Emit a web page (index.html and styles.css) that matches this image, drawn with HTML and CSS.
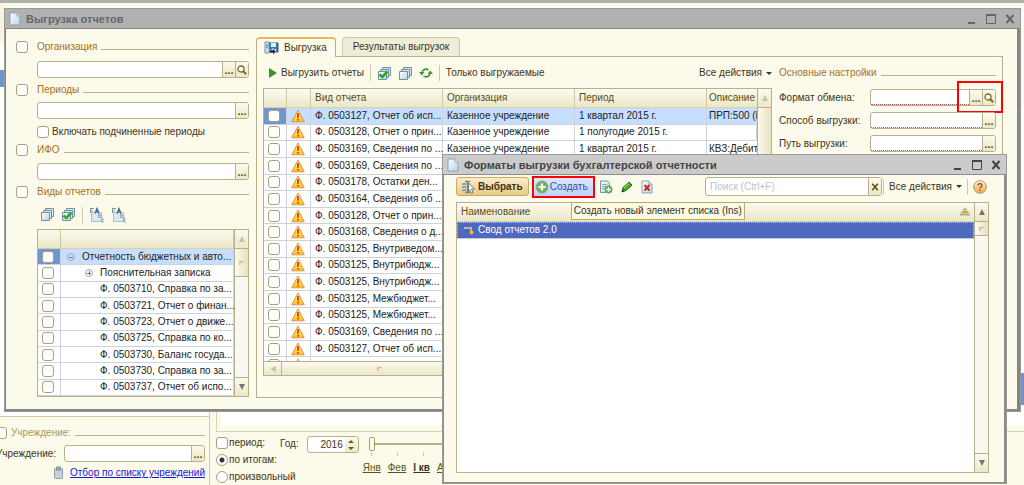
FILE: index.html
```
<!DOCTYPE html>
<html lang="ru">
<head>
<meta charset="utf-8">
<title>Выгрузка отчетов</title>
<link rel="stylesheet" href="styles.css">
</head>
<body>
<svg class="sprite" aria-hidden="true">
  <defs>
    <linearGradient id="gBlue" x1="0" y1="0" x2="1" y2="1"><stop offset="0" stop-color="#fff"/><stop offset="1" stop-color="#b9d3e4"/></linearGradient>
    <linearGradient id="gWarn" x1="0" y1="0" x2="0" y2="1"><stop offset="0" stop-color="#fff0b0"/><stop offset=".6" stop-color="#ffd83c"/><stop offset="1" stop-color="#ffc21e"/></linearGradient>
    <linearGradient id="gHelp" x1="0" y1="0" x2="0" y2="1"><stop offset="0" stop-color="#fff0cf"/><stop offset="1" stop-color="#f0a850"/></linearGradient>
    <symbol id="doc" viewBox="0 0 12 14"><path d="M1 1h7l3 3v9H1z" fill="url(#gBlue)" stroke="#8aa4b5"/><path d="M8 1v3h3" fill="#fff" stroke="#8aa4b5"/></symbol>
    <symbol id="stack" viewBox="0 0 15 15"><path d="M5.500 1.500h8v8h-8z" fill="#d5e5ee" stroke="#6f91a6"/><path d="M3.500 3.500h8v8h-8z" fill="#d5e5ee" stroke="#6f91a6"/><path d="M1.500 5.500h8v8h-8z" fill="url(#gBlue)" stroke="#6f91a6"/></symbol>
    <symbol id="stackok" viewBox="0 0 15 15"><use href="#stack"/><path d="M2.500 8.500l2.800 2.500 5.200-5.500" fill="none" stroke="#35a522" stroke-width="2.600"/></symbol>
    <symbol id="warn" viewBox="0 0 14 14"><path d="M7 1L13.300 12.800H.7z" fill="url(#gWarn)" stroke="#ee8a50" stroke-linejoin="round"/><path d="M7 4v4.800M7 9.900v1.600" stroke="#cc3a18" stroke-width="1.700"/></symbol>
    <symbol id="lens" viewBox="0 0 10 10"><circle cx="4" cy="4" r="3" fill="#fffdf0" stroke="#776b24" stroke-width="1.300"/><path d="M6.200 6.200L9.200 9.200" stroke="#776b24" stroke-width="2"/></symbol>
    <symbol id="refresh" viewBox="0 0 14 12"><path d="M3 6a4 4 0 0 1 6.500-3M11 6a4 4 0 0 1-6.500 3" fill="none" stroke="#3f9130" stroke-width="1.600"/><path d="M0 5h5.500L2.800 8.500zM14 7H8.500l2.700-3.500z" fill="#3f9130"/></symbol>
    <symbol id="tree" viewBox="0 0 16 16"><path d="M2.500 5.500h10l1 9h-11z" fill="#dbe8ee" stroke="#b0c0c8"/><path d="M1 1.500h4M1 4h3M1.500 1v5" stroke="#7d95a3"/><path d="M6 6.500l2-5L10 6.500M7 4.800h2.500" fill="none" stroke="#3a6c92" stroke-width="1.300"/><path d="M9.500 7v3.500H12V8H9.500M15 12h-2.500v3H15" fill="none" stroke="#90a5b0"/></symbol>
    <symbol id="disk" viewBox="0 0 15 14"><path d="M5 2h9v9H5z" fill="#3779b5" stroke="#275d90"/><path d="M7 2h5v4H7zM8 8h4v3H8z" fill="#e4f1fa"/><path d="M1 1h4v11H1z" fill="#cde0ee" stroke="#7898b0"/><path d="M2 4h2M2 6h2" stroke="#47789d"/><path d="M5 9h4v-2l3 3.500-3 3.500v-2H5z" fill="#1e3142" stroke="#fff" stroke-width=".5"/></symbol>
    <symbol id="pick" viewBox="0 0 15 14"><path d="M1 4h4M1 7h4M1 10h4" stroke="#8da4b3" stroke-width="2"/><path d="M4 1.500h5M6.500 2v10M4 12.500h5" fill="none" stroke="#6d8a9e" stroke-width="1.500"/><path d="M7.500 3l6 6h-3l1.500 3.500-1.800.7L8.700 10l-1.200 1.500z" fill="#fff" stroke="#566d80" stroke-width=".9"/></symbol>
    <symbol id="plus" viewBox="0 0 14 14"><circle cx="7" cy="7" r="6" fill="#6eb25b" stroke="#86a97c"/><path d="M7 3.500v7M3.500 7h7" stroke="#fff" stroke-width="2.200"/></symbol>
    <symbol id="docplus" viewBox="0 0 14 14"><path d="M1.500 1h7l2 2.500v9h-9z" fill="url(#gBlue)" stroke="#7193a6"/><path d="M3 4.500h5M3 6.500h5M3 8.500h3" stroke="#8ca9b9"/><circle cx="9.500" cy="9.500" r="3.800" fill="#61aa51" stroke="#87ad7c" stroke-width=".7"/><path d="M9.500 7.300v4.400M7.300 9.500h4.400" stroke="#fff" stroke-width="1.300"/></symbol>
    <symbol id="pencil" viewBox="0 0 12 12"><path d="M1 11l1-4.500 6-5.500 3 3-6 5.500z" fill="#47aa22" stroke="#287018"/><path d="M3 7l5-4.500" stroke="#b2ea87"/><path d="M1 11l.6-2.500 1.900 1.800z" fill="#1f3414"/></symbol>
    <symbol id="docdel" viewBox="0 0 12 14"><use href="#doc"/><path d="M3.500 5l5 5.500M8.500 5l-5 5.500" stroke="#d0251c" stroke-width="1.900"/></symbol>
    <symbol id="clip" viewBox="0 0 11 14"><rect x="1.500" y="2.500" width="8" height="10" rx="1" fill="#c7d1d8" stroke="#8c99a2"/><path d="M3.500 1h4v3h-4z" fill="#a6b2ba" stroke="#808d96"/></symbol>
    <symbol id="item" viewBox="0 0 12 10"><path d="M1 3h7v3" fill="none" stroke="#b9bb9c" stroke-width="2"/><circle cx="8.500" cy="7.500" r="2" fill="#f2b43e"/></symbol>
    <symbol id="min" viewBox="0 0 10 10"><path d="M1 9h7" stroke="currentColor" stroke-width="2"/></symbol>
    <symbol id="max" viewBox="0 0 10 10"><path d="M.5 1h9v8.500h-9z" fill="none" stroke="currentColor"/><path d="M0 1h10" stroke="currentColor" stroke-width="2"/></symbol>
    <symbol id="close" viewBox="0 0 10 10"><path d="M1.500 1l7 8M8.500 1l-7 8" stroke="currentColor" stroke-width="2"/></symbol>
    <symbol id="help" viewBox="0 0 14 14"><circle cx="7" cy="7" r="6.300" fill="url(#gHelp)" stroke="#b9936d"/><path d="M5 5.500C5 3 9 3 9 5.300 9 7 7 6.800 7 8.500M7 9.800V11" fill="none" stroke="#7d4b1c" stroke-width="1.300"/></symbol>
    <symbol id="grip" viewBox="0 0 6 6"><path d="M1 5V1.500h4" fill="none" stroke="#c8c198" stroke-width="1.500"/></symbol>
  </defs>
</svg>

<div class="desktop">
  <div class="backdrop">
    <div class="back-list"><i class="back-selected"></i></div>
    <div class="back-side"></div>
  </div>

  <section class="filters">
    <form class="org">
      <div class="legend dim"><input type="checkbox" id="f-org"><label for="f-org">Учреждение:</label></div>
      <div class="org-row"><label for="org-name">Учреждение:</label>
        <div class="combo"><input type="text" id="org-name"><button type="button" aria-label="Выбрать">...</button></div></div>
      <div class="org-link"><svg width="11" height="14"><use href="#clip"/></svg><a href="#">Отбор по списку учреждений</a></div>
    </form>
    <form class="time">
      <div class="time-frame"></div>
      <div class="time-body">
        <div class="modes">
          <label><input type="checkbox">период:</label>
          <label><input type="radio" name="mode" checked>по итогам:</label>
          <label><input type="radio" name="mode">произвольный</label>
        </div>
        <label class="year-label" for="year">Год:</label>
        <div class="combo year"><input type="text" id="year" value="2016"><button type="button" aria-label="Изменить год"><svg width="8" height="12" viewBox="0 0 8 12"><path d="M1 4l3-3 3 3zM1 8l3 3 3-3z" fill="#6b5c18"/></svg></button></div>
        <div class="months">
          <input type="range" min="0" max="12" value="0" aria-label="Месяц">
          <div class="ticks"><i></i><i></i><i></i></div>
          <div class="month-links"><a href="#">Янв</a><a href="#">Фев</a><a href="#" class="quarter">I кв</a><a href="#">А</a></div>
        </div>
      </div>
    </form>
  </section>

  <main class="window reports">
    <header class="titlebar"><svg width="12" height="14"><use href="#doc"/></svg><h1>Выгрузка отчетов</h1>
      <button aria-label="Свернуть"><svg width="10" height="10"><use href="#min"/></svg></button><button aria-label="Развернуть"><svg width="10" height="10"><use href="#max"/></svg></button><button aria-label="Закрыть"><svg width="10" height="10"><use href="#close"/></svg></button></header>
    <div class="reports-body">
      <form class="criteria">
        <div class="legend"><input type="checkbox" id="c-org"><label for="c-org">Организация</label></div>
        <div class="combo"><input type="text" aria-label="Организация"><button type="button" aria-label="Выбрать">...</button><button type="button" aria-label="Найти"><svg width="10" height="10"><use href="#lens"/></svg></button></div>
        <div class="legend"><input type="checkbox" id="c-per"><label for="c-per">Периоды</label></div>
        <div class="combo"><input type="text" aria-label="Периоды"><button type="button" aria-label="Выбрать">...</button></div>
        <label class="nested"><input type="checkbox">Включать подчиненные периоды</label>
        <div class="legend ifo"><input type="checkbox" id="c-ifo"><label for="c-ifo">ИФО</label></div>
        <div class="combo"><input type="text" aria-label="ИФО"><button type="button" aria-label="Выбрать">...</button></div>
        <div class="legend kinds"><input type="checkbox" id="c-kind"><label for="c-kind">Виды отчетов</label></div>
        <div class="tools kind-tools">
          <button type="button" aria-label="Снять все"><svg width="15" height="15"><use href="#stack"/></svg></button>
          <button type="button" aria-label="Отметить все"><svg width="15" height="15"><use href="#stackok"/></svg></button>
          <i class="sep"></i>
          <button type="button" aria-label="Развернуть дерево"><svg width="16" height="16"><use href="#tree"/></svg></button>
          <button type="button" aria-label="Свернуть дерево"><svg width="16" height="16"><use href="#tree"/></svg></button>
        </div>
        <div class="grid kind-grid">
          <div class="grid-view">
            <table>
              <colgroup><col class="c-check"><col></colgroup>
              <thead><tr><th></th><th></th></tr></thead>
              <tbody>
                <tr class="current"><td><input type="checkbox" aria-label="Отметить"></td><td class="l0"><span class="node minus"></span>Отчетность бюджетных и авто...</td></tr>
                <tr><td><input type="checkbox" aria-label="Отметить"></td><td class="l1"><span class="node plus"></span>Пояснительная записка</td></tr>
                <tr><td><input type="checkbox" aria-label="Отметить"></td><td class="l2">Ф. 0503710, Справка по за...</td></tr>
                <tr><td><input type="checkbox" aria-label="Отметить"></td><td class="l2">Ф. 0503721, Отчет о финан...</td></tr>
                <tr><td><input type="checkbox" aria-label="Отметить"></td><td class="l2">Ф. 0503723, Отчет о движе...</td></tr>
                <tr><td><input type="checkbox" aria-label="Отметить"></td><td class="l2">Ф. 0503725, Справка по ко...</td></tr>
                <tr><td><input type="checkbox" aria-label="Отметить"></td><td class="l2">Ф. 0503730, Баланс госуда...</td></tr>
                <tr><td><input type="checkbox" aria-label="Отметить"></td><td class="l2">Ф. 0503730, Справка по за...</td></tr>
                <tr><td><input type="checkbox" aria-label="Отметить"></td><td class="l2">Ф. 0503737, Отчет об испо...</td></tr>
              </tbody>
            </table>
          </div>
          <div class="vbar"><i class="up off"></i><i class="thumb tall"><svg width="6" height="6"><use href="#grip"/></svg></i><i class="down"></i></div>
        </div>
      </form>

      <div class="tabs">
        <nav role="tablist"><button role="tab" aria-selected="true"><svg width="15" height="14"><use href="#disk"/></svg>Выгрузка</button><button role="tab" aria-selected="false">Результаты выгрузок</button></nav>
        <div class="panel">
          <section class="upload">
            <div class="tools">
              <button class="run"><svg width="8" height="10" viewBox="0 0 8 10"><path d="M0 0l8 5-8 5z" fill="#37952a"/></svg>Выгрузить отчеты</button>
              <i class="sep"></i>
              <button aria-label="Отметить все"><svg width="15" height="15"><use href="#stackok"/></svg></button>
              <button aria-label="Снять все"><svg width="15" height="15"><use href="#stack"/></svg></button>
              <button aria-label="Обновить"><svg width="14" height="12"><use href="#refresh"/></svg></button>
              <i class="sep"></i>
              <button>Только выгружаемые</button>
              <button class="menu">Все действия</button>
            </div>
            <div class="grid report-grid">
              <div class="grid-view">
                <table>
                  <colgroup><col class="c-check"><col class="c-icon"><col class="c-text"><col class="c-text"><col class="c-text"><col></colgroup>
                  <thead><tr><th></th><th></th><th>Вид отчета</th><th>Организация</th><th>Период</th><th class="cut">Описание а</th></tr></thead>
                  <tbody>
                    <tr class="current"><td><input type="checkbox" aria-label="Отметить"></td><td><svg width="14" height="14"><use href="#warn"/></svg></td><td>Ф. 0503127, Отчет об исп...</td><td>Казенное учреждение</td><td>1 квартал 2015 г.</td><td class="cut">ПРП:500 (Е</td></tr>
                    <tr><td><input type="checkbox" aria-label="Отметить"></td><td><svg width="14" height="14"><use href="#warn"/></svg></td><td>Ф. 0503128, Отчет о прин...</td><td>Казенное учреждение</td><td>1 полугодие 2015 г.</td><td></td></tr>
                    <tr><td><input type="checkbox" aria-label="Отметить"></td><td><svg width="14" height="14"><use href="#warn"/></svg></td><td>Ф. 0503169, Сведения по ...</td><td>Казенное учреждение</td><td>1 квартал 2015 г.</td><td class="cut">КВЗ:Дебит</td></tr>
                    <tr><td><input type="checkbox" aria-label="Отметить"></td><td><svg width="14" height="14"><use href="#warn"/></svg></td><td>Ф. 0503169, Сведения по ...</td><td></td><td></td><td></td></tr>
                    <tr><td><input type="checkbox" aria-label="Отметить"></td><td><svg width="14" height="14"><use href="#warn"/></svg></td><td>Ф. 0503178, Остатки ден...</td><td></td><td></td><td></td></tr>
                    <tr><td><input type="checkbox" aria-label="Отметить"></td><td><svg width="14" height="14"><use href="#warn"/></svg></td><td>Ф. 0503164, Сведения об ...</td><td></td><td></td><td></td></tr>
                    <tr><td><input type="checkbox" aria-label="Отметить"></td><td><svg width="14" height="14"><use href="#warn"/></svg></td><td>Ф. 0503128, Отчет о прин...</td><td></td><td></td><td></td></tr>
                    <tr><td><input type="checkbox" aria-label="Отметить"></td><td><svg width="14" height="14"><use href="#warn"/></svg></td><td>Ф. 0503168, Сведения о д...</td><td></td><td></td><td></td></tr>
                    <tr><td><input type="checkbox" aria-label="Отметить"></td><td><svg width="14" height="14"><use href="#warn"/></svg></td><td>Ф. 0503125, Внутриведом...</td><td></td><td></td><td></td></tr>
                    <tr><td><input type="checkbox" aria-label="Отметить"></td><td><svg width="14" height="14"><use href="#warn"/></svg></td><td>Ф. 0503125, Внутрибюдж...</td><td></td><td></td><td></td></tr>
                    <tr><td><input type="checkbox" aria-label="Отметить"></td><td><svg width="14" height="14"><use href="#warn"/></svg></td><td>Ф. 0503125, Внутрибюдж...</td><td></td><td></td><td></td></tr>
                    <tr><td><input type="checkbox" aria-label="Отметить"></td><td><svg width="14" height="14"><use href="#warn"/></svg></td><td>Ф. 0503125, Межбюджет...</td><td></td><td></td><td></td></tr>
                    <tr><td><input type="checkbox" aria-label="Отметить"></td><td><svg width="14" height="14"><use href="#warn"/></svg></td><td>Ф. 0503125, Межбюджет...</td><td></td><td></td><td></td></tr>
                    <tr><td><input type="checkbox" aria-label="Отметить"></td><td><svg width="14" height="14"><use href="#warn"/></svg></td><td>Ф. 0503169, Сведения по ...</td><td></td><td></td><td></td></tr>
                    <tr><td><input type="checkbox" aria-label="Отметить"></td><td><svg width="14" height="14"><use href="#warn"/></svg></td><td>Ф. 0503127, Отчет об исп...</td><td></td><td></td><td></td></tr>
                    <tr><td><input type="checkbox" aria-label="Отметить"></td><td><svg width="14" height="14"><use href="#warn"/></svg></td><td></td><td></td><td></td><td></td></tr>
                  </tbody>
                </table>
              </div>
              <div class="vbar"><i class="up off"></i><i class="thumb full"></i></div>
              <div class="hbar"><i class="left"></i><i class="thumb"><svg width="6" height="6"><use href="#grip"/></svg></i></div>
            </div>
          </section>
          <form class="settings">
            <div class="legend"><span>Основные настройки</span></div>
            <label for="s-format">Формат обмена:</label>
            <div class="combo required"><input type="text" id="s-format"><button type="button" aria-label="Выбрать">...</button><button type="button" aria-label="Найти"><svg width="10" height="10"><use href="#lens"/></svg></button><i class="mark"></i></div>
            <label for="s-way">Способ выгрузки:</label>
            <div class="combo required"><input type="text" id="s-way"><button type="button" aria-label="Выбрать">...</button></div>
            <label for="s-path">Путь выгрузки:</label>
            <div class="combo required"><input type="text" id="s-path"><button type="button" aria-label="Выбрать">...</button></div>
          </form>
        </div>
      </div>
    </div>
  </main>

  <section class="window formats">
    <header class="titlebar"><svg width="12" height="14"><use href="#doc"/></svg><h2>Форматы выгрузки бухгалтерской отчетности</h2>
      <button aria-label="Свернуть"><svg width="10" height="10"><use href="#min"/></svg></button><button aria-label="Развернуть"><svg width="10" height="10"><use href="#max"/></svg></button><button aria-label="Закрыть"><svg width="10" height="10"><use href="#close"/></svg></button></header>
    <div class="formats-body">
      <div class="tools">
        <button class="choose"><svg width="15" height="14"><use href="#pick"/></svg>Выбрать</button>
        <div class="create-mark"><button class="create"><svg width="14" height="14"><use href="#plus"/></svg>Создать</button><div class="tip" role="tooltip">Создать новый элемент списка (Ins)</div></div>
        <button aria-label="Скопировать"><svg width="14" height="14"><use href="#docplus"/></svg></button>
        <button aria-label="Изменить"><svg width="12" height="12"><use href="#pencil"/></svg></button>
        <button aria-label="Удалить"><svg width="12" height="14"><use href="#docdel"/></svg></button>
        <div class="combo search"><input type="text" placeholder="Поиск (Ctrl+F)" aria-label="Поиск"><button aria-label="Очистить"><svg width="8" height="8"><use href="#close"/></svg></button></div>
        <i class="sep"></i>
        <button class="menu">Все действия</button>
        <i class="sep"></i>
        <button aria-label="Справка"><svg width="14" height="14"><use href="#help"/></svg></button>
      </div>
      <div class="grid format-grid">
        <div class="grid-view">
          <table>
            <thead><tr><th><div class="sorted">Наименование<svg width="12" height="8" viewBox="0 0 12 8"><path d="M4 1.500h4M2.500 4h7M1 6.500h10" stroke="#b8ad72" stroke-width="2"/></svg></div></th></tr></thead>
            <tbody><tr class="chosen"><td><svg width="12" height="10"><use href="#item"/></svg>Свод отчетов 2.0</td></tr></tbody>
          </table>
        </div>
        <div class="vbar"><i class="up"></i><i class="thumb short"><svg width="6" height="6"><use href="#grip"/></svg></i><i class="down"></i></div>
      </div>
    </div>
  </section>
</div>
</body>
</html>
```

FILE: styles.css
```
:root {
  --cream: #fcfaeb;
  --line: #b8b08a;
  --row-line: #ccd3d9;
  --ink: #3c3516;
  --gold: #a8701c;
  --face: linear-gradient(#fbfaee, #ece7c8);
}
* { box-sizing: border-box; }
body {
  margin: 0;
  font: 10px/14px "Liberation Sans", Arial, sans-serif;
  color: var(--ink);
}
button, input { font: inherit; color: inherit; margin: 0; }
button { padding: 0; border: 0; background: none; white-space: nowrap; }
svg { display: block; flex: none; }
i { display: block; flex: none; }
.sprite { position: absolute; width: 0; height: 0; }

.desktop {
  position: relative;
  display: flex;
  flex-direction: column;
  min-height: 100vh;
  overflow: hidden;
  border-top: 3px solid #b0b0b0;
  background: var(--cream);
}
.backdrop { flex: 1; display: flex; justify-content: space-between; }
.back-list { width: 6px; padding-top: 67px; background: linear-gradient(#f8f4e0 40px, #fff 40px); }
.back-selected { height: 17px; background: #6e96d2; }
.back-side { width: 8px; background: linear-gradient(#fcfaeb 104px, #fff 104px, #fff 370px, #6e96d2 370px, #6e96d2 402px, #fff 402px); }

input[type="checkbox"], input[type="radio"] {
  appearance: none;
  flex: none;
  width: 12px;
  height: 12px;
  border: 1px solid #a8a27a;
  border-radius: 3px;
  background: #fff;
}
input[type="radio"] { border-radius: 50%; }
input[type="radio"]:checked { background: radial-gradient(#333 2px, #fff 3px); }

.combo {
  position: relative;
  display: flex;
  min-width: 0;
  height: 17px;
  border: 1px solid var(--line);
  border-radius: 3px;
  background: #fff;
}
.combo input { flex: 1; min-width: 0; padding: 0 4px; border: 0; background: none; outline: 0; }
.combo button {
  flex: none;
  display: grid;
  place-items: center;
  width: 13px;
  border-left: 1px solid var(--line);
  background: var(--face);
  color: #5f5212;
  font-size: 11px;
  font-weight: bold;
}
.combo button:last-of-type { border-radius: 0 2px 2px 0; }
.required input { border-bottom: 1px dotted #e0405a; }
.mark { position: absolute; inset: -9px -8px -8px auto; width: 46px; border: 2px solid #f00; }

.legend { display: flex; align-items: center; color: var(--gold); }
.legend::after { content: ""; flex: 1; height: 1px; margin: 4px 0 0 4px; background: var(--line); }
.legend input { margin-right: 9px; }

.window {
  position: absolute;
  display: flex;
  flex-direction: column;
  border: 1px solid #9a9a9a;
  background: var(--cream);
}
.titlebar { display: flex; align-items: center; gap: 17px; height: 19px; padding: 0 5px 0 4px; background: #b1b1b1; color: #666; }
.titlebar h1, .titlebar h2 { flex: 1; margin: 0 0 0 -12px; font-size: 11px; line-height: 14px; }
.titlebar button { width: 10px; height: 10px; margin-right: -8px; }
.titlebar button:last-child { margin-right: 0; }

.reports { inset: 5px 3px 73px 4px; }
.reports-body {
  flex: 1;
  min-height: 0;
  display: flex;
  gap: 7px;
  padding: 8px 14px 11px 10px;
  border: 1px solid #858585;
  border-right-width: 3px;
  border-bottom-width: 2px;
}
.criteria { flex: none; width: 233px; display: flex; flex-direction: column; padding-top: 3px; }
.criteria > :not(.legend) { margin-left: 21px; }
.criteria > .legend { margin-bottom: 7px; }
.criteria > .combo + .legend { margin: 5px 0 5px; }
.criteria > .combo + .kinds { margin: 5px 0 7px; }
.criteria > .ifo { margin: 4px 0 6px; }
.nested { display: flex; align-items: center; gap: 3px; margin-top: 6px; }

.tools { display: flex; align-items: center; gap: 6px; }
.sep { width: 1px; height: 16px; background: #d0c9a6; }
.kind-tools { height: 17px; padding-left: 3px; }
.menu { display: flex; align-items: center; gap: 4px; }
.menu::after { content: ""; border: 3px solid transparent; border-top: 3px solid var(--ink); border-bottom: 0; }

.grid { display: grid; grid-template-columns: 1fr 14px; border: 1px solid var(--line); background: #fff; min-height: 0; }
.grid-view { overflow: hidden; min-width: 0; min-height: 0; }
table { width: 100%; border-spacing: 0; table-layout: fixed; color: #222; }
th {
  height: 19px;
  padding: 0 0 0 4px;
  border-right: 1px solid #cfc8a3;
  border-bottom: 1px solid #d8d2b2;
  background: var(--face);
  color: #5c4d16;
  font-weight: normal;
  text-align: left;
}
td {
  padding: 0 0 0 4px;
  border-right: 1px solid var(--row-line);
  border-bottom: 1px solid var(--row-line);
  line-height: 12px;
  white-space: nowrap;
}
td input, td svg { display: block; }
.cut { padding-left: 2px; overflow: hidden; white-space: nowrap; border-right: 0; }
.c-check { width: 23px; }
.c-icon { width: 24px; }
.c-text { width: 132px; }
.current td { background: #c6deff; }
.current td:first-child { background: #6e96d2; }
.kind-grid { height: 168px; margin-top: 6px; }
.kind-grid table { height: 166px; }
.l1 { padding-left: 22px; }
.l2 { padding-left: 39px; }
.node {
  display: inline-block;
  width: 8px;
  height: 8px;
  margin: 0 7px 0 2px;
  border: 1px solid #a5a5a5;
  border-radius: 50%;
  vertical-align: middle;
}
.minus { background: linear-gradient(#777, #777) center / 4px 1px no-repeat; }
.plus { background: linear-gradient(#777, #777) center / 4px 1px no-repeat, linear-gradient(#777, #777) center / 1px 4px no-repeat; }
.vbar { display: flex; flex-direction: column; border-left: 1px solid var(--line); background: #f9f8f2; }
.up, .down, .left { display: grid; place-items: center; background: var(--face); }
.up, .down { height: 19px; }
.up { border-bottom: 1px solid var(--line); }
.down { border-top: 1px solid var(--line); margin-top: auto; }
.up::before, .down::before, .left::before { content: ""; border: 3px solid transparent; }
.up::before { border-bottom: 6px solid #777; border-top: 0; }
.up.off::before { border-bottom-color: #c6c3ad; }
.down::before { border-top: 6px solid #777; border-bottom: 0; }
.left::before { border-right: 6px solid #c6c3ad; border-left: 0; }
.thumb { display: grid; place-items: center; background: linear-gradient(90deg, #fbfaee, #e8e2c0); border-bottom: 1px solid var(--line); }
.tall { height: 28px; }
.short { height: 14px; }
.full { flex: 1; }
.hbar { grid-column: 1 / -1; display: flex; height: 14px; border-top: 1px solid var(--line); }
.left { width: 18px; border-right: 1px solid var(--line); }
.hbar .thumb { flex: 1; justify-content: start; padding-left: 95px; background: var(--face); border: 0; }

.tabs { flex: 1; min-width: 0; display: flex; flex-direction: column; }
.tabs nav { display: flex; align-items: end; gap: 6px; height: 19px; }
.tabs nav button {
  display: flex;
  align-items: center;
  gap: 5px;
  height: 19px;
  padding: 0 10px;
  border: 1px solid #cfc8a6;
  border-bottom: 0;
  border-radius: 4px 4px 0 0;
  background: #efecd8;
}
.tabs nav button[aria-selected="true"] { height: 20px; margin-bottom: -1px; padding: 0 8px 0 7px; border-color: var(--line); border-top: 2px solid #e8b858; background: var(--cream); z-index: 1; }
.panel { flex: 1; min-height: 0; display: flex; gap: 7px; padding: 6px 6px 21px; border: 1px solid var(--line); }
.upload { flex: 1; min-width: 0; display: flex; flex-direction: column; }
.upload .tools { height: 20px; padding-left: 6px; margin-bottom: 5px; }
.upload .menu { margin-left: auto; }
.run { display: flex; align-items: center; gap: 4px; }
.report-grid { flex: 1; grid-template-rows: 1fr auto; }
.report-grid table { height: 285px; }
.settings {
  flex: none;
  width: 217px;
  display: grid;
  grid-template-columns: 1fr 126px;
  align-content: start;
  align-items: center;
  row-gap: 6px;
  padding-top: 3px;
}
.settings .legend { grid-column: 1 / -1; margin-bottom: 3px; }

.formats { inset: 151px 17px 1px 442px; }
.formats .titlebar { background: #cbcbcb; color: #444; }
.formats-body {
  flex: 1;
  min-height: 0;
  display: flex;
  flex-direction: column;
  gap: 5px;
  padding: 1px 15px 9px 12px;
  border: 1px solid #8c8c8c;
  border-right-width: 2px;
}
.formats .tools { height: 21px; gap: 8px; padding-right: 2px; }
.choose {
  display: flex;
  align-items: center;
  gap: 2px;
  height: 19px;
  padding: 0 5px 0 4px;
  border: 1px solid #c9a963;
  border-radius: 3px;
  background: linear-gradient(#fbeccb, #edc983);
  font-weight: bold;
}
.create-mark { position: relative; margin: 0 -4px 0 -5px; border: 2px solid #f00; }
.create { display: flex; align-items: center; gap: 1px; height: 18px; padding: 0 5px 0 1px; background: linear-gradient(#dce8ff, #bcd2fa); color: #3d4f9e; }
.tip {
  position: absolute;
  top: 24px;
  left: 37px;
  padding: 1px 2px;
  border: 1px solid #b5ab70;
  background: #fffce2;
  color: #333;
  white-space: nowrap;
  z-index: 1;
}
.search { flex: none; width: 177px; height: 19px; margin-left: auto; }
.search input::placeholder { color: #c3c3c3; opacity: 1; }
.formats .sep { margin: 0 -3px; }
.formats .search + .sep { margin-left: -7px; }
.format-grid { flex: 1; }
.sorted { display: flex; align-items: center; justify-content: space-between; padding-right: 3px; }
.format-grid th, .format-grid td { border-right: 0; }
.chosen td { height: 17px; background: #5069c0; color: #fff; outline: 1px dotted #b5c1ef; outline-offset: -1px; }
.chosen svg { display: inline-block; margin: 0 3px 0 2px; vertical-align: middle; }

.filters { flex: none; display: flex; height: 73px; background: var(--cream); }
.org {
  flex: none;
  display: flex;
  flex-direction: column;
  width: 210px;
  padding: 5px 4px 0 0;
  border-right: 1px solid #cfc9aa;
  background: linear-gradient(#fff 4px, #cfc8a3 4px, #cfc8a3 5px, transparent 5px);
}
.org .legend { margin: 9px 0 5px -5px; color: #a39b62; }
.org .legend input { margin-right: 4px; }
.org-row { display: flex; align-items: center; gap: 8px; margin-left: -4px; }
.org-row .combo { flex: 1; }
.org-link { display: flex; align-items: center; justify-content: end; gap: 6px; margin-top: 4px; }
.org-link a { color: #1717d8; }
.time { flex: 1; min-width: 0; margin-left: 6px; }
.time-frame { height: 20px; border: 1px solid #d8d2b2; border-top: 0; border-right: 0; padding: 0 0 6px 4px; background: #fff content-box; }
.time-body { display: flex; align-items: start; padding-top: 4px; }
.modes { display: flex; flex-direction: column; gap: 3px; width: 64px; white-space: nowrap; }
.modes label { display: flex; align-items: center; gap: 1px; }
.year-label { margin-top: 1px; }
.year { width: 52px; margin-left: 8px; }
.year input { text-align: right; padding-right: 2px; }
.year button { border: 0; }
.months { width: 130px; margin-left: 10px; }
.months input {
  appearance: none;
  display: block;
  width: 130px;
  height: 16px;
  background: linear-gradient(var(--line), var(--line)) center / 100% 2px no-repeat;
}
.months input::-webkit-slider-thumb { appearance: none; width: 6px; height: 14px; border: 1px solid #a59c6c; border-radius: 2px; background: var(--cream); }
.ticks { display: flex; gap: 25px; padding-left: 2px; }
.ticks i { width: 1px; height: 4px; background: #cfc8a3; }
.month-links { display: flex; gap: 7px; margin: 5px 0 0 -6px; }
.month-links a { color: #5f5212; }
.month-links .quarter { color: var(--ink); font-weight: bold; }
```
